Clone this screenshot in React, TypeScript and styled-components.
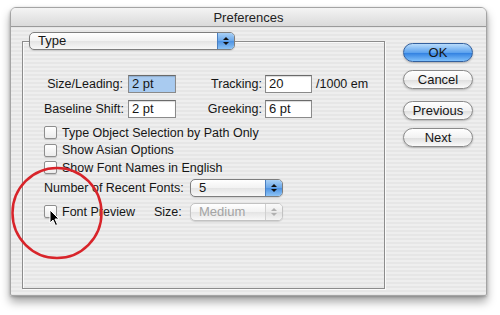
import React from "react";
import styled, { createGlobalStyle } from "styled-components";

const GlobalStyle = createGlobalStyle`
  html, body {
    margin: 0;
    background: #ffffff;
  }
  body {
    font-family: "Liberation Sans", Arial, sans-serif;
    color: #161616;
  }
`;

const Page = styled.div`
  position: relative;
  width: 500px;
  height: 315px;
  padding: 7px 0 0 10px;
  box-sizing: border-box;
  overflow: hidden;
`;

// Fenêtre Aqua avec rayures horizontales
const Window = styled.div`
  width: 477px;
  height: 289px;
  box-sizing: border-box;
  border: 1px solid #a4a4a4;
  border-radius: 6px 6px 2px 2px;
  background: repeating-linear-gradient(
    to bottom,
    #eeeeee 0px,
    #eeeeee 2px,
    #e6e6e6 2px,
    #e6e6e6 4px
  );
  box-shadow: 0 6px 10px rgba(0, 0, 0, 0.35), 0 1px 3px rgba(0, 0, 0, 0.25);
  display: flex;
  flex-direction: column;
`;

const TitleBar = styled.div`
  height: 18px;
  border-bottom: 1px solid #9a9a9a;
  border-radius: 5px 5px 0 0;
  background: linear-gradient(to bottom, #f4f4f4, #dadada);
  display: flex;
  align-items: center;
  justify-content: center;
  font-size: 13px;
  color: #222;
`;

const Body = styled.div`
  flex: 1;
  display: flex;
  align-items: flex-start;
  padding: 5px 0 0 11px;
`;

const GroupBox = styled.fieldset`
  margin: 0;
  padding: 0;
  width: 363px;
  height: 257px;
  box-sizing: border-box;
  border: 1px solid #8c8c8c;
  box-shadow: inset 1px 1px 0 #fafafa, 1px 1px 0 #fafafa;
`;

const Legend = styled.legend`
  padding: 0;
  margin-left: 6px;
`;

const PopupBox = styled.div<{ $width: number; $disabled?: boolean }>`
  width: ${(p) => p.$width}px;
  height: 18px;
  box-sizing: border-box;
  display: flex;
  border: 1px solid ${(p) => (p.$disabled ? "#c2c2c2" : "#7e7e7e")};
  border-radius: 5px;
  overflow: hidden;
  background: linear-gradient(to bottom, #ffffff, #f2f2f2 50%, #e4e4e4 51%, #f8f8f8);
  box-shadow: 0 1px 1px rgba(0, 0, 0, 0.12);
  font-size: 13px;
  color: ${(p) => (p.$disabled ? "#a4a4a4" : "#161616")};
`;

const PopupText = styled.div`
  flex: 1;
  display: flex;
  align-items: center;
  padding-left: 8px;
  line-height: 16px;
`;

const PopupCap = styled.div<{ $disabled?: boolean }>`
  width: 16px;
  display: flex;
  flex-direction: column;
  align-items: center;
  justify-content: center;
  gap: 2px;
  border-left: 1px solid ${(p) => (p.$disabled ? "#d0d0d0" : "#4a7fc0")};
  background: ${(p) =>
    p.$disabled
      ? "linear-gradient(to bottom, #fafafa, #ececec 50%, #e0e0e0 51%, #f4f4f4)"
      : "linear-gradient(to bottom, #a9d0f5, #6aa7ea 50%, #4d92e2 51%, #8dc3f5)"};
`;

const Arrow = styled.div<{ $down?: boolean; $disabled?: boolean }>`
  width: 0;
  height: 0;
  border-left: 3px solid transparent;
  border-right: 3px solid transparent;
  ${(p) =>
    p.$down
      ? `border-top: 3px solid ${p.$disabled ? "#b0b0b0" : "#111"};`
      : `border-bottom: 3px solid ${p.$disabled ? "#b0b0b0" : "#111"};`}
`;

function Popup({ width, label, disabled }: { width: number; label: string; disabled?: boolean }) {
  return (
    <PopupBox $width={width} $disabled={disabled}>
      <PopupText>{label}</PopupText>
      <PopupCap $disabled={disabled}>
        <Arrow $disabled={disabled} />
        <Arrow $down $disabled={disabled} />
      </PopupCap>
    </PopupBox>
  );
}

const Content = styled.div`
  padding: 25px 0 0 21px;
  font-size: 12.5px;
`;

const FieldGrid = styled.div`
  display: grid;
  grid-template-columns: 84px 48px 89px 47px auto;
  row-gap: 7px;
  align-items: center;
`;

const Label = styled.div<{ $pad?: number }>`
  text-align: right;
  padding-right: ${(p) => p.$pad ?? 5}px;
  white-space: nowrap;
`;

const Field = styled.div<{ $selected?: boolean }>`
  height: 18px;
  box-sizing: border-box;
  border: 1px solid #8a8a8a;
  border-top-color: #6a6a6a;
  background: ${(p) => (p.$selected ? "#a9cbf0" : "#ffffff")};
  box-shadow: inset 0 1px 1px rgba(0, 0, 0, 0.15);
  padding-left: 3px;
  line-height: 16px;
  font-size: 13px;
`;

const Unit = styled.div`
  padding-left: 4px;
`;

const CheckList = styled.div`
  display: flex;
  flex-direction: column;
  margin-top: 6px;
`;

const CheckRow = styled.div`
  height: 17.5px;
  display: flex;
  align-items: center;
  gap: 5px;
  white-space: nowrap;
`;

const Box = styled.div`
  width: 11px;
  height: 11px;
  border: 1px solid #8e8e8e;
  border-radius: 2px;
  background: linear-gradient(to bottom, #ffffff, #ececec);
  box-shadow: 0 1px 1px rgba(0, 0, 0, 0.15);
  flex: none;
`;

const FontGrid = styled.div`
  display: grid;
  grid-template-columns: 110px 36px 93px;
  row-gap: 6px;
  align-items: center;
  margin-top: 2px;
`;

const SpanLabel = styled.div`
  grid-column: 1 / 3;
  white-space: nowrap;
`;

const Buttons = styled.div`
  display: flex;
  flex-direction: column;
  margin: 11px 0 0 18px;
`;

const AquaButton = styled.div<{ $default?: boolean; $gap: number }>`
  width: 70px;
  height: 19px;
  margin-top: ${(p) => p.$gap}px;
  box-sizing: border-box;
  border-radius: 10px;
  border: 1px solid ${(p) => (p.$default ? "#33609e" : "#8a8a8a")};
  background: ${(p) =>
    p.$default
      ? "linear-gradient(to bottom, #b9dcfb, #5ea3ee 50%, #2f7fe0 52%, #7fc0fb)"
      : "linear-gradient(to bottom, #ffffff, #f2f2f2 50%, #dedede 52%, #fbfbfb)"};
  box-shadow: 0 1px 2px rgba(0, 0, 0, 0.25);
  display: flex;
  align-items: center;
  justify-content: center;
  font-size: 13px;
  color: #161616;
`;

// Annotation rouge et curseur, posés par-dessus la fenêtre
const Circle = styled.svg`
  position: absolute;
  left: 10px;
  top: 166px;
`;

const Cursor = styled.svg`
  position: absolute;
  left: 49px;
  top: 209px;
`;

export default function App() {
  return (
    <>
      <GlobalStyle />
      <Page>
        <Window>
          <TitleBar>Preferences</TitleBar>
          <Body>
            <GroupBox>
              <Legend>
                <Popup width={206} label="Type" />
              </Legend>
              <Content>
                <FieldGrid>
                  <Label>Size/Leading:</Label>
                  <Field $selected>2 pt</Field>
                  <Label $pad={3}>Tracking:</Label>
                  <Field>20</Field>
                  <Unit>/1000 em</Unit>
                  <Label>Baseline Shift:</Label>
                  <Field>2 pt</Field>
                  <Label $pad={3}>Greeking:</Label>
                  <Field>6 pt</Field>
                  <div />
                </FieldGrid>
                <CheckList>
                  <CheckRow>
                    <Box />
                    Type Object Selection by Path Only
                  </CheckRow>
                  <CheckRow>
                    <Box />
                    Show Asian Options
                  </CheckRow>
                  <CheckRow>
                    <Box />
                    Show Font Names in English
                  </CheckRow>
                </CheckList>
                <FontGrid>
                  <SpanLabel>Number of Recent Fonts:</SpanLabel>
                  <Popup width={93} label="5" />
                  <CheckRow>
                    <Box />
                    Font Preview
                  </CheckRow>
                  <Label $pad={10}>Size:</Label>
                  <Popup width={93} label="Medium" disabled />
                </FontGrid>
              </Content>
            </GroupBox>
            <Buttons>
              <AquaButton $default $gap={0}>OK</AquaButton>
              <AquaButton $gap={8}>Cancel</AquaButton>
              <AquaButton $gap={12}>Previous</AquaButton>
              <AquaButton $gap={8}>Next</AquaButton>
            </Buttons>
          </Body>
        </Window>
        <Circle width="96" height="96" viewBox="0 0 96 96">
          <ellipse cx="47" cy="47" rx="44.5" ry="45" fill="none" stroke="#d8242a" strokeWidth="2.5" />
        </Circle>
        <Cursor width="12" height="18" viewBox="0 0 12 18">
          <path d="M1 1 L1 14 L4 11 L6.5 16.5 L8.5 15.5 L6 10 L10 10 Z" fill="#000" stroke="#fff" strokeWidth="1" />
        </Cursor>
      </Page>
    </>
  );
}
